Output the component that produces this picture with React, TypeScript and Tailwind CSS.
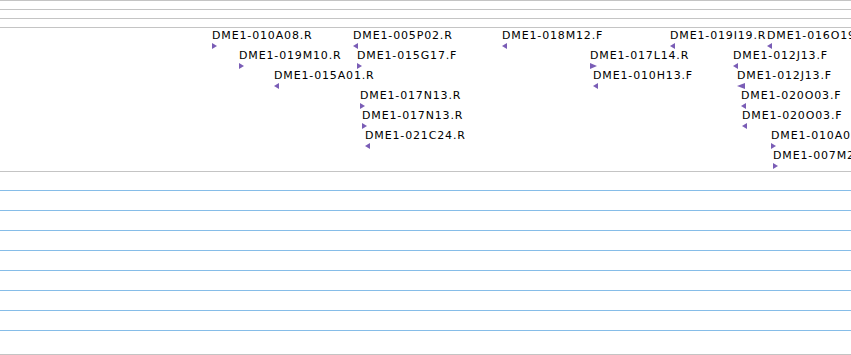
type Feature = {
  name: string;
  x: number;
  row: number;
  dir: "l" | "r";
  w?: number;
};

const features: Feature[] = [
  { name: "DME1-010A08.R", x: 212, row: 0, dir: "r" },
  { name: "DME1-005P02.R", x: 353, row: 0, dir: "l" },
  { name: "DME1-018M12.F", x: 502, row: 0, dir: "l" },
  { name: "DME1-019I19.R", x: 670, row: 0, dir: "l" },
  { name: "DME1-016O19.F", x: 767, row: 0, dir: "l" },
  { name: "DME1-019M10.R", x: 239, row: 1, dir: "r" },
  { name: "DME1-015G17.F", x: 357, row: 1, dir: "r" },
  { name: "DME1-017L14.R", x: 590, row: 1, dir: "r", w: 7 },
  { name: "DME1-012J13.F", x: 733, row: 1, dir: "l" },
  { name: "DME1-015A01.R", x: 274, row: 2, dir: "l" },
  { name: "DME1-010H13.F", x: 593, row: 2, dir: "l" },
  { name: "DME1-012J13.F", x: 737, row: 2, dir: "l", w: 8 },
  { name: "DME1-017N13.R", x: 360, row: 3, dir: "r" },
  { name: "DME1-020O03.F", x: 741, row: 3, dir: "l" },
  { name: "DME1-017N13.R", x: 362, row: 4, dir: "r" },
  { name: "DME1-020O03.F", x: 742, row: 4, dir: "l" },
  { name: "DME1-021C24.R", x: 365, row: 5, dir: "l" },
  { name: "DME1-010A03.R", x: 771, row: 5, dir: "r" },
  { name: "DME1-007M22.R", x: 773, row: 6, dir: "r" },
];

function Marker({ dir, w = 5 }: { dir: "l" | "r"; w?: number }) {
  const pts = dir === "r" ? `0,0 ${w},3 0,6` : `${w},0 0,3 ${w},6`;
  return (
    <svg width={w} height={6} className="block mt-[1px]" aria-hidden="true">
      <polygon points={pts} fill="#7a5db6" />
    </svg>
  );
}

const blueRows = [0, 1, 2, 3, 4, 5, 6];

export default function App() {
  return (
    <div className="w-[851px] h-[355px] overflow-hidden bg-white font-['DejaVu_Sans',sans-serif]">
      {/* ruler lines */}
      <div className="h-[9px] border-t border-[#c4c4c4]" />
      <div className="h-[9px] border-t border-[#c4c4c4]" />
      <div className="h-[9px] border-t border-[#c4c4c4]" />

      {/* feature track */}
      <div className="relative h-[144px] border-t border-[#c4c4c4]">
        {features.map((f, i) => (
          <div
            key={i}
            className="absolute whitespace-nowrap"
            style={{ left: f.x, top: f.row * 20 + 1 }}
          >
            <div className="text-[11px] leading-[13px] tracking-[0.85px] text-black">
              {f.name}
            </div>
            <Marker dir={f.dir} w={f.w} />
          </div>
        ))}
      </div>

      {/* coverage track */}
      <div className="h-[19px] border-t border-[#c4c4c4]" />
      {blueRows.map((r) => (
        <div key={r} className="h-[20px] border-t border-[#86bde8]" />
      ))}
      <div className="h-[24px] border-t border-[#86bde8]" />
      <div className="h-[1px] border-t border-[#c4c4c4]" />
    </div>
  );
}
